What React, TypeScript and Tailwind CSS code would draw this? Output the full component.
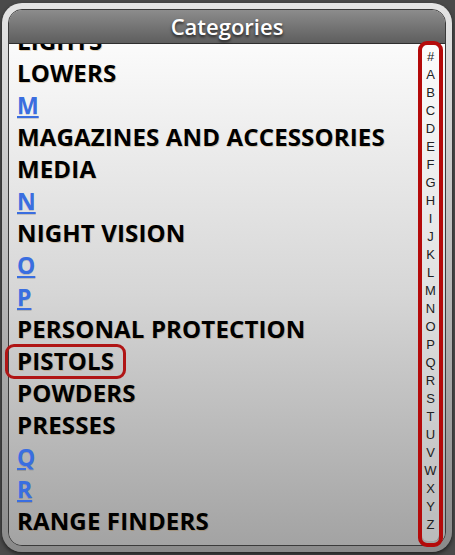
const ROWS: { label: string; link?: boolean }[] = [
  { label: 'LIGHTS' },
  { label: 'LOWERS' },
  { label: 'M', link: true },
  { label: 'MAGAZINES AND ACCESSORIES' },
  { label: 'MEDIA' },
  { label: 'N', link: true },
  { label: 'NIGHT VISION' },
  { label: 'O', link: true },
  { label: 'P', link: true },
  { label: 'PERSONAL PROTECTION' },
  { label: 'PISTOLS' },
  { label: 'POWDERS' },
  { label: 'PRESSES' },
  { label: 'Q', link: true },
  { label: 'R', link: true },
  { label: 'RANGE FINDERS' },
  { label: 'REBUILD KITS' },
]

const INDEX = ['#', ...'ABCDEFGHIJKLMNOPQRSTUVWXYZ'.split('')]

export default function App() {
  return (
    <div className="relative w-[455px] h-[555px] overflow-hidden bg-[#4a4a4a] pt-[3px] pl-[2px]">
      {/* Outer frame */}
      <div className="w-[450px] h-[549px] rounded-[20px] bg-gradient-to-b from-[#e4e4e4] via-[#b8b8b8] to-[#8a8a8a] p-[6px] shadow-[0_2px_4px_rgba(0,0,0,0.6)]">
        <div className="h-full flex flex-col rounded-[14px] overflow-hidden border border-[#3a3a3a]">
          {/* Header */}
          <div className="h-[34px] shrink-0 flex items-center justify-center bg-gradient-to-b from-[#8c8c8c] to-[#5e5e5e] border-b border-[#2e2e2e]">
            <span className="text-white text-[22px] [font-family:'Open_Sans',sans-serif] font-semibold [text-shadow:0_2px_3px_rgba(0,0,0,0.7)]">
              Categories
            </span>
          </div>

          {/* Content */}
          <div className="flex-1 flex overflow-hidden bg-gradient-to-b from-[#fbfbfb] via-[#d6d6d6] to-[#a3a3a3]">
            <div className="flex-1 overflow-hidden">
              <div className="mt-[-19px] pl-[8px]">
                {ROWS.map(r => (
                  <div key={r.label} className="h-[32px] flex items-center">
                    {r.link ? (
                      <a className="text-[23px] font-bold text-[#3a6ee0] underline underline-offset-2 [font-family:'Open_Sans',sans-serif] [text-shadow:0_1px_0_rgba(0,0,0,0.15)]">
                        {r.label}
                      </a>
                    ) : (
                      <span className="text-[24px] font-bold text-black tracking-[0.15px] whitespace-nowrap [font-family:'Open_Sans',sans-serif] [text-shadow:1px_1px_0_rgba(150,90,0,0.25)]">
                        {r.label}
                      </span>
                    )}
                  </div>
                ))}
              </div>
            </div>

            {/* Index strip */}
            <div className="w-[18px] mr-[5px] mt-[4px] mb-[4px] flex flex-col rounded-b-[6px] bg-white/25 border-r border-[#7a7a7a]">
              {INDEX.map(c => (
                <div key={c} className="h-[18px] flex items-center justify-center text-[13px] text-[#222] [font-family:'Liberation_Sans',sans-serif]">
                  {c}
                </div>
              ))}
            </div>
          </div>
        </div>
      </div>

      {/* Annotation outlines */}
      <div className="absolute left-[418px] top-[41px] w-[25px] h-[506px] rounded-[9px] border-[4px] border-[#b40a0a]" />
      <div className="absolute left-[5px] top-[344px] w-[121px] h-[35px] rounded-[9px] border-[3px] border-[#b01515]" />
    </div>
  )
}
